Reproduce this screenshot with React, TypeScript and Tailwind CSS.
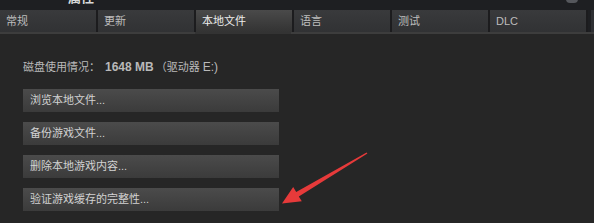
const tabs = ["常规", "更新", "本地文件", "语言", "测试", "DLC"];
const actions = [
  "浏览本地文件...",
  "备份游戏文件...",
  "删除本地游戏内容...",
  "验证游戏缓存的完整性...",
];

export default function App() {
  return (
    <div
      className="relative w-[594px] h-[223px] overflow-hidden bg-[#262626] text-[11px]"
      style={{ fontFamily: '"Liberation Sans", "Noto Sans CJK SC", sans-serif' }}
    >
      {/* window title strip, mostly cut off */}
      <div className="flex h-[10px] items-end justify-between overflow-hidden bg-[#1e1f22]">
        <span className="ml-[68px] mb-[6px] text-[13px] font-bold leading-none text-[#d8d8d8]">
          属性
        </span>
        <span className="mr-[16px] mb-[7px] h-[10px] w-[12px] rounded-sm bg-[#55575c]" />
      </div>

      {/* tabs */}
      <div className="flex h-[22px] gap-[2px] bg-[#1c1c1e]">
        {tabs.map((t, i) => {
          const active = i === 2;
          return (
            <div
              key={t}
              className={
                active
                  ? "flex w-[96px] items-center px-[6px] text-[11px] bg-gradient-to-b from-[#4a4a4a] to-[#333333] text-[#ececec]"
                  : "flex w-[96px] items-center px-[6px] text-[11px] bg-gradient-to-b from-[#393a3c] to-[#313234] text-[#bdbdbd]"
              }
            >
              {t}
            </div>
          );
        })}
        <div className="flex flex-1 gap-[2px] bg-[#1e1f22] pl-[3px]">
          <div className="w-[3px] bg-[#2e2f33]" />
        </div>
      </div>
      <div className="flex h-[2px]">
        <div className="w-[195px] bg-[#3d3d3d]" />
        <div className="w-[96px] bg-[#333333]" />
        <div className="flex-1 bg-[#3d3d3d]" />
      </div>

      {/* content */}
      <div className="flex flex-col pl-[23px] pt-[25px]">
        <div className="leading-[16px] text-[#b9b9b9]">
          磁盘使用情况：
          <span className="ml-[5px] mr-[2px] text-[12px] font-bold">1648 MB</span>
          （驱动器 <span className="text-[12px]">E:)</span>
        </div>
        <div className="mt-[14px] flex flex-col gap-[10px]">
          {actions.map((a) => (
            <div
              key={a}
              className="flex h-[23px] w-[256px] items-center px-[7px] bg-gradient-to-b from-[#4b4b4b] to-[#3b3b3b] text-[#d2d2d2]"
            >
              {a}
            </div>
          ))}
        </div>
      </div>

      {/* red annotation arrow */}
      <svg
        className="absolute left-0 top-0"
        width="594"
        height="223"
        viewBox="0 0 594 223"
      >
        <polygon
          points="367.4,153.5 298.8,196.4 301.8,201.3 282,203.5 293.2,186.9 296.2,191.9 366.6,152.5"
          fill="#e63a3a"
        />
      </svg>
    </div>
  );
}
